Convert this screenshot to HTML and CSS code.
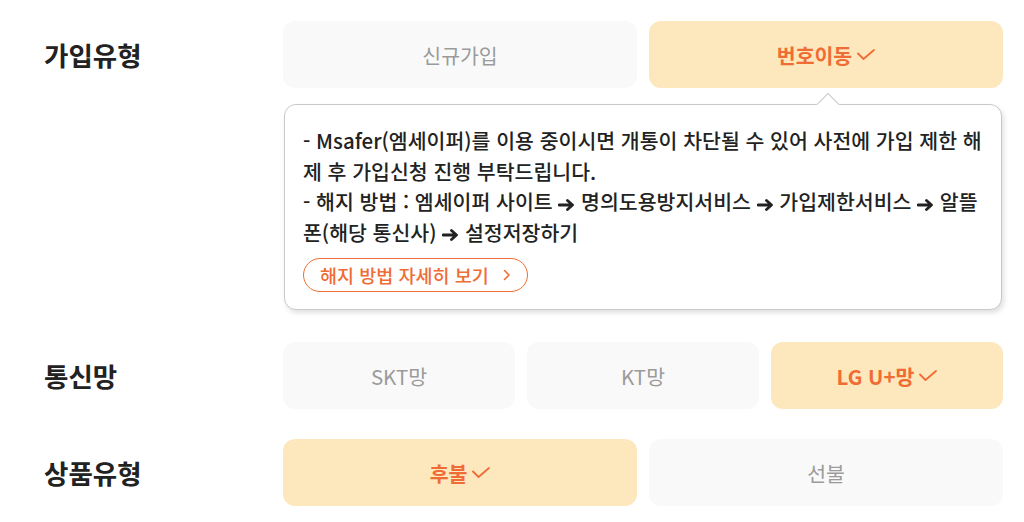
FILE: index.html
```html
<!DOCTYPE html>
<html lang="ko">
<head>
<meta charset="utf-8">
<link rel="stylesheet" href="styles.css">
</head>
<body>
<div class="form">
  <div class="label">가입유형</div>
  <div class="options two">
    <button class="opt">신규가입</button>
    <button class="opt sel">번호이동<svg class="check" viewBox="0 0 18 11"><polyline points="1,4.5 6.5,10 17,1" /></svg></button>
  </div>

  <div class="spacer"></div>
  <div class="tooltip">
    <span class="arrow"></span>
    <p class="tip-text">- Msafer(엠세이퍼)를 이용 중이시면 개통이 차단될 수 있어 사전에 가입 제한 해제 후 가입신청 진행 부탁드립니다.<br>- 해지 방법 : 엠세이퍼 사이트 <svg class="ar" viewBox="0 0 17 12"><path d="M1 6H14M9.5 1.5L14.5 6L9.5 10.5" /></svg> 명의도용방지서비스 <svg class="ar" viewBox="0 0 17 12"><path d="M1 6H14M9.5 1.5L14.5 6L9.5 10.5" /></svg> 가입제한서비스 <svg class="ar" viewBox="0 0 17 12"><path d="M1 6H14M9.5 1.5L14.5 6L9.5 10.5" /></svg> 알뜰폰(해당 통신사) <svg class="ar" viewBox="0 0 17 12"><path d="M1 6H14M9.5 1.5L14.5 6L9.5 10.5" /></svg> 설정저장하기</p>
    <a class="more">해지 방법 자세히 보기<svg class="chev" viewBox="0 0 8 12"><polyline points="1.5,1.5 6,6 1.5,10.5" /></svg></a>
  </div>

  <div class="label row2">통신망</div>
  <div class="options three row2">
    <button class="opt">SKT망</button>
    <button class="opt">KT망</button>
    <button class="opt sel">LG U+망<svg class="check" viewBox="0 0 18 11"><polyline points="1,4.5 6.5,10 17,1" /></svg></button>
  </div>

  <div class="label row3">상품유형</div>
  <div class="options two row3">
    <button class="opt sel">후불<svg class="check" viewBox="0 0 18 11"><polyline points="1,4.5 6.5,10 17,1" /></svg></button>
    <button class="opt">선불</button>
  </div>
</div>
</body>
</html>
```

FILE: styles.css
```css
* { box-sizing: border-box; }
html, body { margin: 0; padding: 0; background: #fff; }
body {
  font-family: "Noto Sans CJK KR", "Noto Sans", sans-serif;
  color: #222;
  width: 1024px;
  height: 522px;
  overflow: hidden;
}
.form {
  display: grid;
  grid-template-columns: 239px 720px;
  padding: 21px 0 0 44px;
}
.label {
  font-size: 26.5px;
  font-weight: 700;
  color: #222;
  display: flex;
  align-items: center;
  height: 67px;
}
.options {
  display: grid;
  gap: 12px;
  height: 67px;
}
.options.two { grid-template-columns: 1fr 1fr; }
.options.three { grid-template-columns: 1fr 1fr 1fr; }
.row2 { margin-top: 32px; }
.row3 { margin-top: 30px; }
.opt {
  border: 0;
  border-radius: 12px;
  background: #f9f9f9;
  color: #9b9b9b;
  font-family: inherit;
  font-size: 20.5px;
  font-weight: 400;
  display: flex;
  align-items: center;
  justify-content: center;
  gap: 5px;
  padding: 0;
  margin: 0;
}
.opt.sel {
  background: #fde7bd;
  color: #ef6c34;
  font-weight: 700;
}
.check {
  width: 18px;
  height: 11px;
  fill: none;
  stroke: #ef6c34;
  stroke-width: 1.8;
  stroke-linecap: round;
  stroke-linejoin: round;
}
.tooltip {
  position: relative;
  margin: 16px 1px 0 1px;
  border: 1px solid #c9c9c9;
  border-radius: 12px;
  background: #fff;
  box-shadow: 2px 3px 5px rgba(0,0,0,0.12);
  padding: 20px 18px 17px 18px;
}
.arrow {
  position: absolute;
  top: -14px;
  left: 529px;
  width: 26px;
  height: 14px;
  overflow: hidden;
}
.arrow::before {
  content: "";
  position: absolute;
  left: 3.5px;
  top: 6px;
  width: 18px;
  height: 18px;
  background: #fff;
  border: 1px solid #c9c9c9;
  transform: rotate(45deg);
}
.tip-text {
  margin: 0;
  font-size: 20.5px;
  font-weight: 500;
  line-height: 30.5px;
  color: #222;
  word-break: normal;
  line-break: anywhere;
}
.ar {
  width: 17px;
  height: 12px;
  vertical-align: -0.5px;
  fill: none;
  stroke: #222;
  stroke-width: 2.8;
  stroke-linecap: round;
  stroke-linejoin: round;
}
.more {
  display: inline-flex;
  align-items: center;
  gap: 14px;
  margin-top: 11px;
  height: 34px;
  padding: 0 16px 0 16px;
  border: 1.5px solid #ef6c34;
  border-radius: 17px;
  color: #ef6c34;
  font-size: 18.5px;
  font-weight: 500;
}
.chev {
  width: 8px;
  height: 12px;
  fill: none;
  stroke: #ef6c34;
  stroke-width: 1.6;
  stroke-linecap: round;
  stroke-linejoin: round;
}
```
